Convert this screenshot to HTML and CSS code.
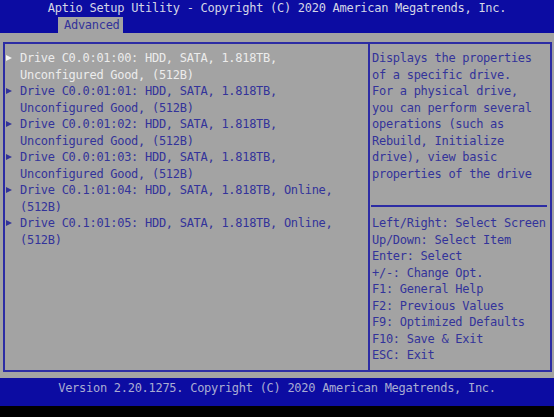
FILE: index.html
```html
<!DOCTYPE html>
<html lang="en">
  <head>
    <meta charset="UTF-8" />
    <meta name="viewport" content="width=device-width, initial-scale=1.0" />
    <title>Aptio Setup Utility</title>
    <link rel="stylesheet" href="styles.css">
  </head>
  <body>
    <div class="screen">
      <header class="topbar">
        <div class="title">Aptio Setup Utility - Copyright (C) 2020 American Megatrends, Inc.</div>
        <nav class="tabs"><span class="tab">Advanced</span></nav>
      </header>
      <main class="content">
        <div class="frame">
          <ul class="drives">
            <li class="drive selected"><span class="arrow"></span><span>Drive C0.0:01:00: HDD, SATA, 1.818TB,<br>Unconfigured Good, (512B)</span></li>
            <li class="drive"><span class="arrow"></span><span>Drive C0.0:01:01: HDD, SATA, 1.818TB,<br>Unconfigured Good, (512B)</span></li>
            <li class="drive"><span class="arrow"></span><span>Drive C0.0:01:02: HDD, SATA, 1.818TB,<br>Unconfigured Good, (512B)</span></li>
            <li class="drive"><span class="arrow"></span><span>Drive C0.0:01:03: HDD, SATA, 1.818TB,<br>Unconfigured Good, (512B)</span></li>
            <li class="drive"><span class="arrow"></span><span>Drive C0.1:01:04: HDD, SATA, 1.818TB, Online,<br>(512B)</span></li>
            <li class="drive"><span class="arrow"></span><span>Drive C0.1:01:05: HDD, SATA, 1.818TB, Online,<br>(512B)</span></li>
          </ul>
          <aside class="help">
            <p class="help-text">Displays the properties<br>of a specific drive.<br>For a physical drive,<br>you can perform several<br>operations (such as<br>Rebuild, Initialize<br>drive), view basic<br>properties of the drive</p>
            <div class="divider"></div>
            <ul class="keys">
              <li>Left/Right: Select Screen</li>
              <li>Up/Down: Select Item</li>
              <li>Enter: Select</li>
              <li>+/-: Change Opt.</li>
              <li>F1: General Help</li>
              <li>F2: Previous Values</li>
              <li>F9: Optimized Defaults</li>
              <li>F10: Save &amp; Exit</li>
              <li>ESC: Exit</li>
            </ul>
          </aside>
        </div>
      </main>
      <footer class="bottombar">Version 2.20.1275. Copyright (C) 2020 American Megatrends, Inc.</footer>
    </div>
  </body>
</html>
```

FILE: styles.css
```css
* {
  margin: 0px;
  padding: 0px;
  box-sizing: border-box;
}
body {
  height: 100vh;
  background-color: black;
  font-family: "DejaVu Sans Mono", "Liberation Mono", monospace;
  font-size: 12px;
  letter-spacing: -0.28px;
}
.screen {
  width: 554px;
}
.topbar {
  height: 33px;
  background-color: #0c0ca2;
}
.title {
  height: 17px;
  line-height: 17px;
  text-align: center;
  color: #d4d6e6;
}
.tabs {
  height: 16px;
  padding-left: 58px;
}
.tab {
  display: inline-block;
  width: 65px;
  height: 16px;
  line-height: 16px;
  padding-left: 6px;
  background-color: #a3a3a3;
  color: #33339a;
}
.content {
  height: 345px;
  padding: 9px 2px 6px 3px;
  background-color: #a3a3a3;
  color: #33339a;
}
.frame {
  display: flex;
  height: 100%;
  border: 2px solid #2c2ca4;
}
ul {
  list-style: none;
}
.drives {
  width: 363px;
  padding-top: 6px;
  line-height: 16.5px;
}
.drive {
  display: flex;
}
.drive .arrow {
  flex: none;
  width: 15px;
  height: 16px;
  padding: 5px 0 0 1px;
}
.drive .arrow::before {
  content: "";
  display: block;
  width: 0;
  height: 0;
  border-left: 6px solid #33339a;
  border-top: 3.5px solid transparent;
  border-bottom: 3.5px solid transparent;
}
.drive.selected {
  color: #ececec;
}
.drive.selected .arrow::before {
  border-left-color: #f4f4f4;
}
.help {
  flex: 1;
  padding: 6px 0 0 2px;
  border-left: 2px solid #2c2ca4;
  line-height: 16.5px;
}
.help-text {
  height: 155px;
}
.divider {
  height: 2px;
  margin: 0 3px 0 -1px;
  background-color: #2c2ca4;
}
.keys {
  padding-top: 8px;
}
.bottombar {
  height: 28px;
  line-height: 20px;
  text-align: center;
  background-color: #0c0ca2;
  color: #a9acd2;
}
```
